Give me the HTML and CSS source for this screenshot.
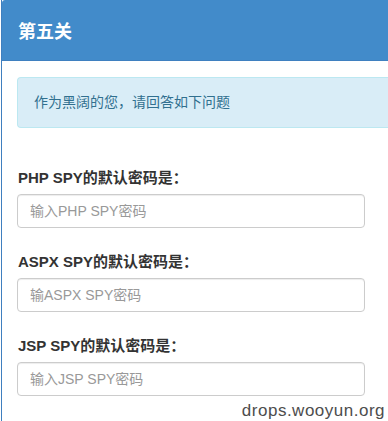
FILE: index.html
```html
<!DOCTYPE html>
<html lang="zh">
<head>
<meta charset="utf-8">
<link rel="stylesheet" href="styles.css">
</head>
<body>
<div class="panel">
  <div class="panel-heading">第五关</div>
  <div class="panel-body">
    <div class="alert">作为黑阔的您，请回答如下问题</div>
    <form class="form">
      <div class="group">
        <label class="label">PHP SPY的默认密码是：</label>
        <input class="input" type="text" placeholder="输入PHP SPY密码">
      </div>
      <div class="group">
        <label class="label">ASPX SPY的默认密码是：</label>
        <input class="input" type="text" placeholder="输ASPX SPY密码">
      </div>
      <div class="group">
        <label class="label">JSP SPY的默认密码是：</label>
        <input class="input" type="text" placeholder="输入JSP SPY密码">
      </div>
    </form>
  </div>
</div>
<div class="watermark">drops.wooyun.org</div>
</body>
</html>
```
FILE: styles.css
```css
html, body {
  margin: 0;
  padding: 0;
  overflow: hidden;
  background: #fff;
}
body {
  width: 388px;
  height: 421px;
  position: relative;
  font-family: "Liberation Sans", "Noto Sans CJK SC", sans-serif;
  font-size: 14px;
  color: #333;
}
.panel {
  margin-left: 1px;
  border-left: 1px solid #3f7fbf;
  min-height: 421px;
  box-sizing: border-box;
}
.panel-heading {
  background: #428bca;
  color: #fff;
  height: 61px;
  box-sizing: border-box;
  padding: 0 0 0 16px;
  display: flex;
  align-items: center;
  font-size: 18px;
  font-weight: bold;
  border-top-left-radius: 3px;
  border-bottom: 1px solid #3f80c0;
}
.panel-body {
  padding: 16px 0 0 15px;
}
.alert {
  background: #d9edf7;
  border: 1px solid #bce8f1;
  border-right: none;
  border-radius: 4px 0 0 4px;
  color: #31708f;
  padding: 15px 16px;
  line-height: 19px;
  font-size: 14px;
}
.form {
  margin-top: 40px;
  display: flex;
  flex-direction: column;
  gap: 24px;
}
.group {
  display: flex;
  flex-direction: column;
  gap: 6px;
}
.label {
  font-weight: bold;
  font-size: 15px;
  line-height: 20px;
  color: #333;
  padding-left: 1px;
}
.input {
  width: 348px;
  height: 34px;
  box-sizing: border-box;
  border: 1px solid #ccc;
  border-radius: 4px;
  box-shadow: inset 0 1px 1px rgba(0,0,0,0.075);
  padding: 6px 12px;
  font-family: "Liberation Sans", "Noto Sans CJK SC", sans-serif;
  font-size: 14px;
  color: #555;
  background: #fff;
  margin: 0;
}
.input::placeholder {
  color: #999;
}
.watermark {
  position: absolute;
  right: 3px;
  bottom: 0px;
  font-family: "Liberation Sans", sans-serif;
  font-size: 17px;
  color: #4d4d4d;
  line-height: 20px;
  letter-spacing: 0.5px;
}
```
